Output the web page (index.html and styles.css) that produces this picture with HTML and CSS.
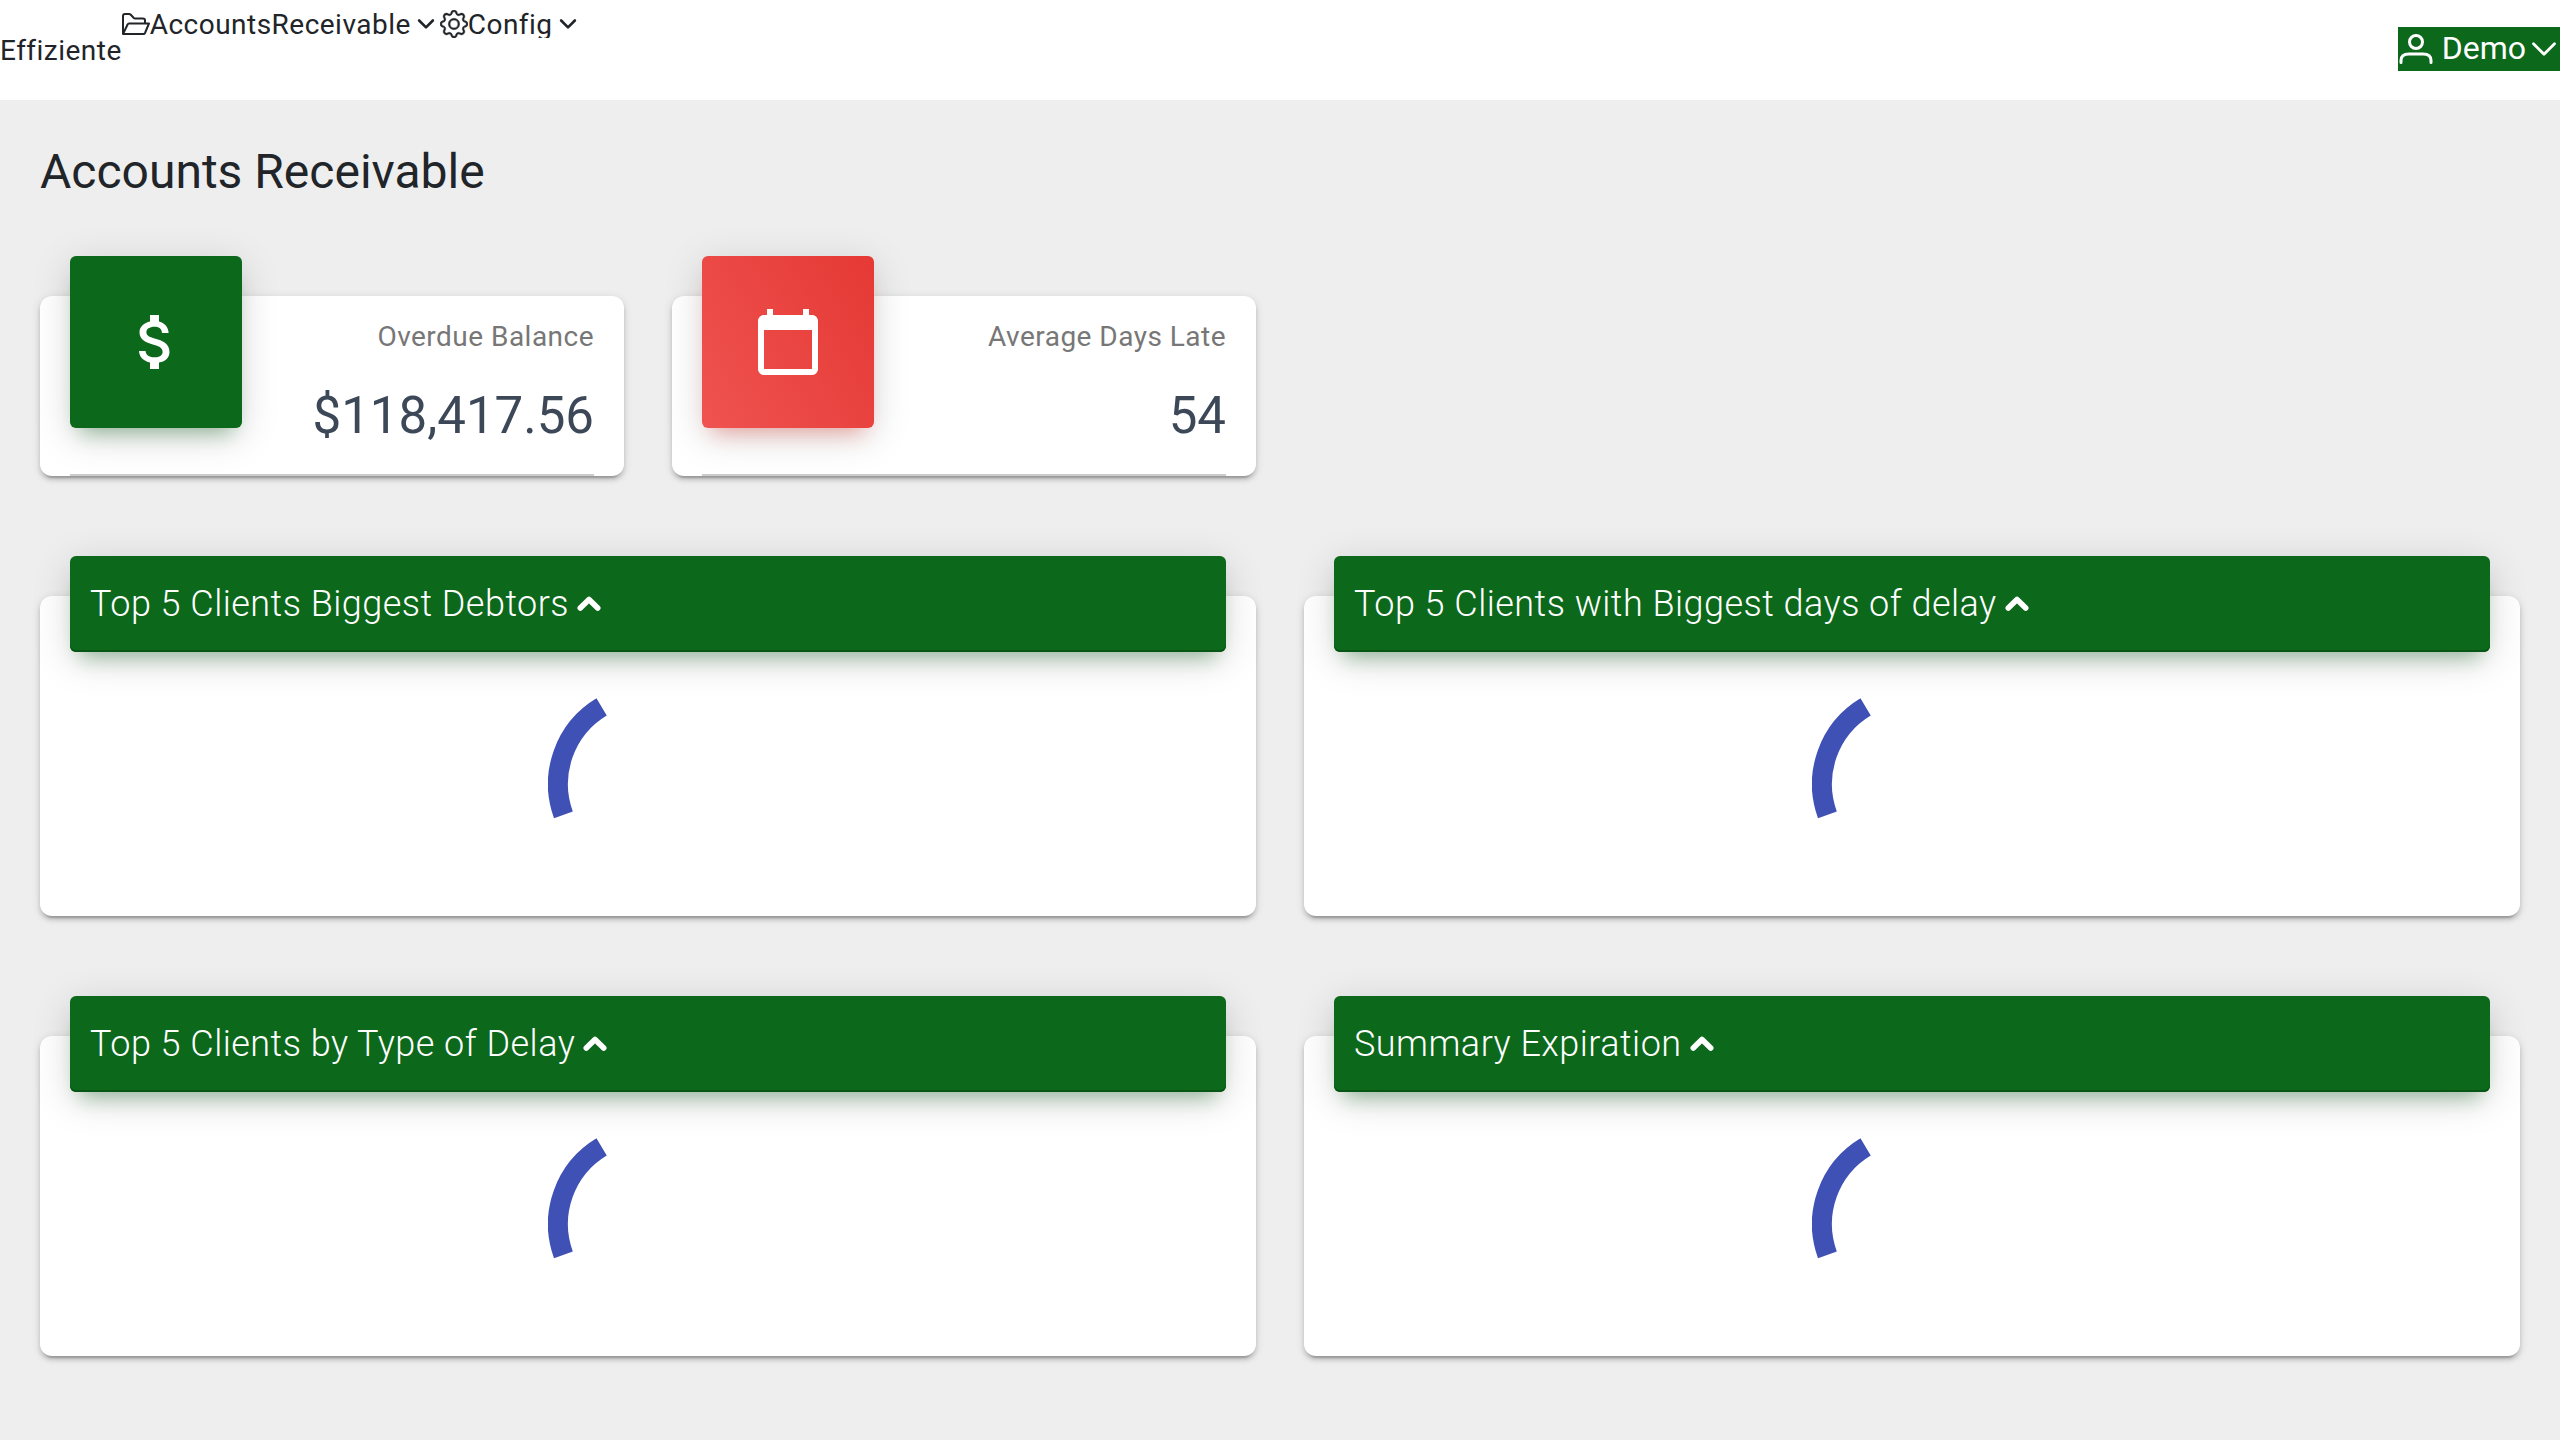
FILE: index.html
```html
<!DOCTYPE html>
<html lang="en">
<head>
<meta charset="utf-8">
<meta name="viewport" content="width=device-width, initial-scale=1">
<title>Effiziente - Accounts Receivable</title>
<link rel="stylesheet" href="styles.css">
</head>
<body>
<svg class="defs" aria-hidden="true">
  <symbol id="chevron-down" viewBox="0 0 16 16"><path d="M2 5l6 6 6-6" fill="none" stroke="currentColor" stroke-width="1.6" stroke-linecap="round" stroke-linejoin="round"/></symbol>
  <symbol id="chevron-small" viewBox="0 0 16 16"><path d="M2.500 5.200l5.500 5.500 5.500-5.500" fill="none" stroke="currentColor" stroke-width="2.100" stroke-linecap="round" stroke-linejoin="round"/></symbol>
  <symbol id="chevron-up" viewBox="0 0 24 16"><path d="M3.300 12.100l8.700-8.600 8.700 8.600" fill="none" stroke="currentColor" stroke-width="5.600" stroke-linecap="round" stroke-linejoin="round"/></symbol>
  <symbol id="spinner" viewBox="0 0 200 200"><path d="M15.400 130.800A90 90 0 0 1 53.600 22.900" fill="none" stroke="currentColor" stroke-width="20"/></symbol>
</svg>
<header class="topbar">
  <a class="brand" href="#">Effiziente</a>
  <nav class="menu">
    <button class="menu-item" type="button">
      <svg class="menu-icon" viewBox="0 0 28 28" fill="none" stroke="currentColor" stroke-width="2" stroke-linejoin="round"><path d="M1 24V6q0-2 2-2h4q1 0 1.800.8l3 3.200q.5.500 1.200.5h8q2 0 2 2v3M1 24l4.600-9.500q.4-1 1.400-1h20l-4 9.500q-.5 1-1.500 1z"/></svg>
      <span>AccountsReceivable</span>
      <svg class="menu-caret"><use href="#chevron-small"/></svg>
    </button>
    <button class="menu-item" type="button">
      <svg class="menu-icon" viewBox="0 0 16 16" fill="currentColor" stroke="currentColor" stroke-width=".25"><path d="M8 4.754a3.246 3.246 0 1 0 0 6.492 3.246 3.246 0 0 0 0-6.492zM5.754 8a2.246 2.246 0 1 1 4.492 0 2.246 2.246 0 0 1-4.492 0z"/><path d="M9.796 1.343c-.527-1.790-3.065-1.790-3.592 0l-.094.319a.873.873 0 0 1-1.255.52l-.292-.16c-1.640-.892-3.433.902-2.540 2.541l.159.292a.873.873 0 0 1-.52 1.255l-.319.094c-1.790.527-1.790 3.065 0 3.592l.319.094a.873.873 0 0 1 .52 1.255l-.16.292c-.892 1.640.901 3.434 2.541 2.540l.292-.159a.873.873 0 0 1 1.255.52l.094.319c.527 1.790 3.065 1.790 3.592 0l.094-.319a.873.873 0 0 1 1.255-.52l.292.16c1.640.893 3.434-.902 2.540-2.541l-.159-.292a.873.873 0 0 1 .52-1.255l.319-.094c1.790-.527 1.790-3.065 0-3.592l-.319-.094a.873.873 0 0 1-.52-1.255l.16-.292c.893-1.640-.902-3.433-2.541-2.540l-.292.159a.873.873 0 0 1-1.255-.52l-.094-.319zm-2.633.283c.246-.835 1.428-.835 1.674 0l.094.319a1.873 1.873 0 0 0 2.693 1.115l.291-.16c.764-.415 1.600.42 1.184 1.185l-.159.292a1.873 1.873 0 0 0 1.116 2.692l.318.094c.835.246.835 1.428 0 1.674l-.319.094a1.873 1.873 0 0 0-1.115 2.693l.16.291c.415.764-.42 1.600-1.185 1.184l-.291-.159a1.873 1.873 0 0 0-2.693 1.116l-.094.318c-.246.835-1.428.835-1.674 0l-.094-.319a1.873 1.873 0 0 0-2.692-1.115l-.292.160c-.764.415-1.600-.42-1.184-1.185l.159-.291A1.873 1.873 0 0 0 1.945 8.930l-.319-.094c-.835-.246-.835-1.428 0-1.674l.319-.094A1.873 1.873 0 0 0 3.060 4.377l-.16-.292c-.415-.764.42-1.600 1.185-1.184l.292.159a1.873 1.873 0 0 0 2.692-1.115l.094-.319z"/></svg>
      <span>Config</span>
      <svg class="menu-caret"><use href="#chevron-small"/></svg>
    </button>
  </nav>
  <button class="user" type="button">
    <svg class="user-icon" viewBox="0 0 36 36" fill="none" stroke="currentColor" stroke-width="3" stroke-linecap="round"><circle cx="18" cy="11" r="6.500"/><path d="M3 31.500v-2q0-6.500 8-6.500h14q8 0 8 6.500v2"/></svg>
    <span>Demo</span>
    <svg class="user-caret"><use href="#chevron-down"/></svg>
  </button>
</header>
<main class="page">
  <h1 class="title">Accounts Receivable</h1>
  <section class="grid stats">
    <article class="card">
      <div class="stat">
        <div class="tile tile-green"><svg class="tile-icon" viewBox="0 0 24 24" fill="currentColor"><path d="M11.800 10.900c-2.270-.59-3-1.200-3-2.150 0-1.090 1.010-1.850 2.700-1.850 1.780 0 2.440.85 2.500 2.100h2.210c-.07-1.720-1.120-3.300-3.210-3.810V3h-3v2.160c-1.940.42-3.500 1.680-3.500 3.610 0 2.310 1.910 3.460 4.700 4.130 2.500.6 3 1.480 3 2.410 0 .69-.49 1.790-2.700 1.790-2.060 0-2.870-.92-2.980-2.100h-2.200c.12 2.190 1.760 3.420 3.680 3.830V21h3v-2.150c1.950-.37 3.500-1.500 3.500-3.550 0-2.840-2.430-3.810-4.700-4.400z"/></svg></div>
        <div class="stat-text"><p class="stat-label">Overdue Balance</p><p class="stat-value">$118,417.56</p></div>
      </div>
      <hr class="rule">
    </article>
    <article class="card">
      <div class="stat">
        <div class="tile tile-red"><svg class="tile-icon" viewBox="0 0 24 24" fill="currentColor"><path d="M20 3h-1V1h-2v2H7V1H5v2H4c-1.100 0-2 .9-2 2v16c0 1.100.9 2 2 2h16c1.100 0 2-.9 2-2V5c0-1.100-.9-2-2-2zm0 18H4V8h16v13z"/></svg></div>
        <div class="stat-text"><p class="stat-label">Average Days Late</p><p class="stat-value">54</p></div>
      </div>
      <hr class="rule">
    </article>
  </section>
  <section class="grid panels">
    <article class="card">
      <button class="panel-head" type="button"><span>Top 5 Clients Biggest Debtors</span><svg class="panel-caret"><use href="#chevron-up"/></svg></button>
      <div class="panel-body"><svg class="spinner" role="img" aria-label="Loading"><use href="#spinner"/></svg></div>
    </article>
    <article class="card">
      <button class="panel-head" type="button"><span>Top 5 Clients with Biggest days of delay</span><svg class="panel-caret"><use href="#chevron-up"/></svg></button>
      <div class="panel-body"><svg class="spinner" role="img" aria-label="Loading"><use href="#spinner"/></svg></div>
    </article>
    <article class="card">
      <button class="panel-head" type="button"><span>Top 5 Clients by Type of Delay</span><svg class="panel-caret"><use href="#chevron-up"/></svg></button>
      <div class="panel-body"><svg class="spinner" role="img" aria-label="Loading"><use href="#spinner"/></svg></div>
    </article>
    <article class="card">
      <button class="panel-head" type="button"><span>Summary Expiration</span><svg class="panel-caret"><use href="#chevron-up"/></svg></button>
      <div class="panel-body"><svg class="spinner" role="img" aria-label="Loading"><use href="#spinner"/></svg></div>
    </article>
  </section>
</main>
</body>
</html>
```
FILE: styles.css
```css
* { box-sizing: border-box; }
body {
  margin: 0;
  min-height: 100vh;
  background: #eee;
  color: #212529;
  font-family: Roboto, sans-serif;
  font-size: 28px;
  letter-spacing: .017em;
}
p, h1 { margin: 0; }
svg { display: block; flex: none; }
button {
  margin: 0;
  padding: 0;
  border: 0;
  background: none;
  color: inherit;
  font: inherit;
  letter-spacing: inherit;
  text-align: left;
}
.defs { position: absolute; width: 0; height: 0; }

.topbar { display: flex; height: 100px; background: #fff; }
.brand { align-self: center; color: inherit; text-decoration: none; }
.menu { display: flex; align-self: flex-start; padding-top: 8px; }
.menu-item { display: flex; align-items: flex-start; height: 30px; overflow: hidden; line-height: 34px; }
.menu-icon { width: 28px; height: 28px; margin-top: 2px; }
.menu-caret { width: 20px; height: 20px; margin: 6px 4px 0 5px; }
.user {
  display: flex;
  align-items: center;
  align-self: center;
  height: 44px;
  margin: 0 0 2px auto;
  background: #0c681b;
  color: #fff;
  font-size: 32px;
  letter-spacing: 0;
  line-height: 40px;
}
.user span { padding-bottom: 2px; }
.user-icon { width: 36px; height: 36px; margin-right: 8px; }
.user-caret { width: 28px; height: 28px; margin: 0 2px 0 4px; }

.page { padding: 40px; }
.title { font-size: 48px; font-weight: 400; letter-spacing: 0; line-height: 64px; }
.grid { display: grid; gap: 48px; }
.stats { grid-template-columns: repeat(4, 1fr); margin-top: 92px; }
.panels { grid-template-columns: repeat(2, 1fr); row-gap: 120px; margin-top: 120px; }
.card {
  min-width: 0;
  padding: 0 30px;
  border-radius: 12px;
  background: #fff;
  box-shadow: 0 6px 2px -4px rgba(0, 0, 0, .2), 0 4px 4px rgba(0, 0, 0, .14), 0 2px 10px rgba(0, 0, 0, .12);
}

.stat { display: flex; justify-content: space-between; height: 178px; }
.rule { margin: 0; border: 0; border-top: 2px solid #ccc; }
.tile {
  display: grid;
  place-items: center;
  width: 172px;
  height: 172px;
  margin-top: -40px;
  border-radius: 6px;
  color: #fff;
}
.tile-green { background: #0c681b; box-shadow: 0 8px 40px rgba(0, 0, 0, .14), 0 14px 20px -10px rgba(12, 104, 27, .4); }
.tile-red { background: linear-gradient(60deg, #ef5350, #e53935); box-shadow: 0 8px 40px rgba(0, 0, 0, .14), 0 14px 20px -10px rgba(244, 67, 54, .4); }
.tile-icon { width: 72px; height: 72px; }
.stat-text { padding-top: 20px; text-align: right; }
.stat-label { color: #777; line-height: 42px; }
.stat-value { margin-top: 24px; color: #3c4858; font-size: 51px; letter-spacing: 0; line-height: 68px; }

.panel-head {
  display: flex;
  align-items: center;
  gap: 8px;
  width: 100%;
  height: 96px;
  margin-top: -40px;
  padding: 0 20px;
  border-radius: 6px;
  background: #0c681b;
  box-shadow: inset 0 -2px #085514, 0 8px 40px rgba(0, 0, 0, .14), 0 14px 20px -10px rgba(12, 104, 27, .4);
  color: #fff;
  font-size: 36px;
  font-weight: 300;
}
.panel-caret { width: 24px; height: 16px; }
.panel-body { height: 264px; padding-top: 32px; }
.spinner { width: 200px; height: 200px; margin: 0 auto; color: #3f51b5; }
```
